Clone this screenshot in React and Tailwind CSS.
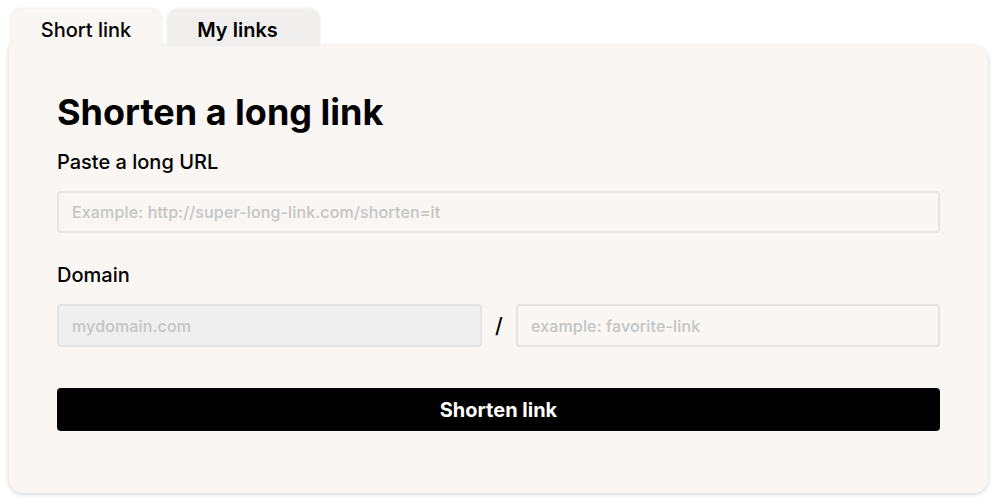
import React, { useState } from 'react';

const App = () => {
  const [tab, setTab] = useState('short');
  const [url, setUrl] = useState('');
  const [slug, setSlug] = useState('');

  return (
    <div className="min-h-screen bg-white px-[9px] pt-[9px] font-['Inter',sans-serif] text-black">
      <div className="flex items-end gap-[5px] pl-[1px]">
        <button
          onClick={() => setTab('short')}
          className="h-[37px] w-[152px] rounded-t-[12px] bg-[#f9f6f3] pt-[5px] text-[20px] font-medium shadow-[0_-1px_3px_rgba(0,0,0,0.08)]"
        >
          Short link
        </button>
        <button
          onClick={() => setTab('mine')}
          className="h-[37px] w-[153px] rounded-t-[12px] bg-[#f0efee] pt-[5px] pr-[12px] text-[20px] font-semibold shadow-[0_-1px_3px_rgba(0,0,0,0.08)]"
        >
          My links
        </button>
      </div>

      <div className="w-[979px] rounded-b-[14px] rounded-tr-[14px] bg-[#f9f6f3] px-[48px] pt-[42px] pb-[62px] shadow-[0_1px_5px_rgba(0,0,0,0.18)]">
        <h1 className="text-[36px] font-bold leading-[48px]">Shorten a long link</h1>

        <label className="mt-[14px] block text-[20px] font-medium leading-[24px]">Paste a long URL</label>
        <input
          value={url}
          onChange={(e) => setUrl(e.target.value)}
          placeholder="Example: http://super-long-link.com/shorten=it"
          className="mt-[17px] block h-[42px] w-full rounded-[4px] border-2 border-[#e6e5e4] bg-[#f9f6f3] px-[13px] text-[16px] font-medium tracking-[0.15px] placeholder:text-[#c4c4c4] focus:outline-none"
        />

        <label className="mt-[30px] block text-[20px] font-medium leading-[24px]">Domain</label>
        <div className="mt-[17px] flex items-center">
          <input
            disabled
            placeholder="mydomain.com"
            className="block h-[43px] w-[425px] rounded-[4px] border-2 border-[#e3e3e3] bg-[#efefef] px-[13px] text-[16px] font-medium tracking-[0.15px] placeholder:text-[#c4c4c4]"
          />
          <span className="w-[34px] text-center text-[21px] font-medium">/</span>
          <input
            value={slug}
            onChange={(e) => setSlug(e.target.value)}
            placeholder="example: favorite-link"
            className="block h-[43px] flex-1 rounded-[4px] border-2 border-[#e6e5e4] bg-[#f9f6f3] px-[13px] text-[16px] font-medium tracking-[0.15px] placeholder:text-[#c4c4c4] focus:outline-none"
          />
        </div>

        <button className="mt-[41px] flex h-[43px] w-full items-center justify-center rounded-[4px] bg-black text-[20px] font-bold text-white">
          Shorten link
        </button>
      </div>
    </div>
  );
};

export default App;
